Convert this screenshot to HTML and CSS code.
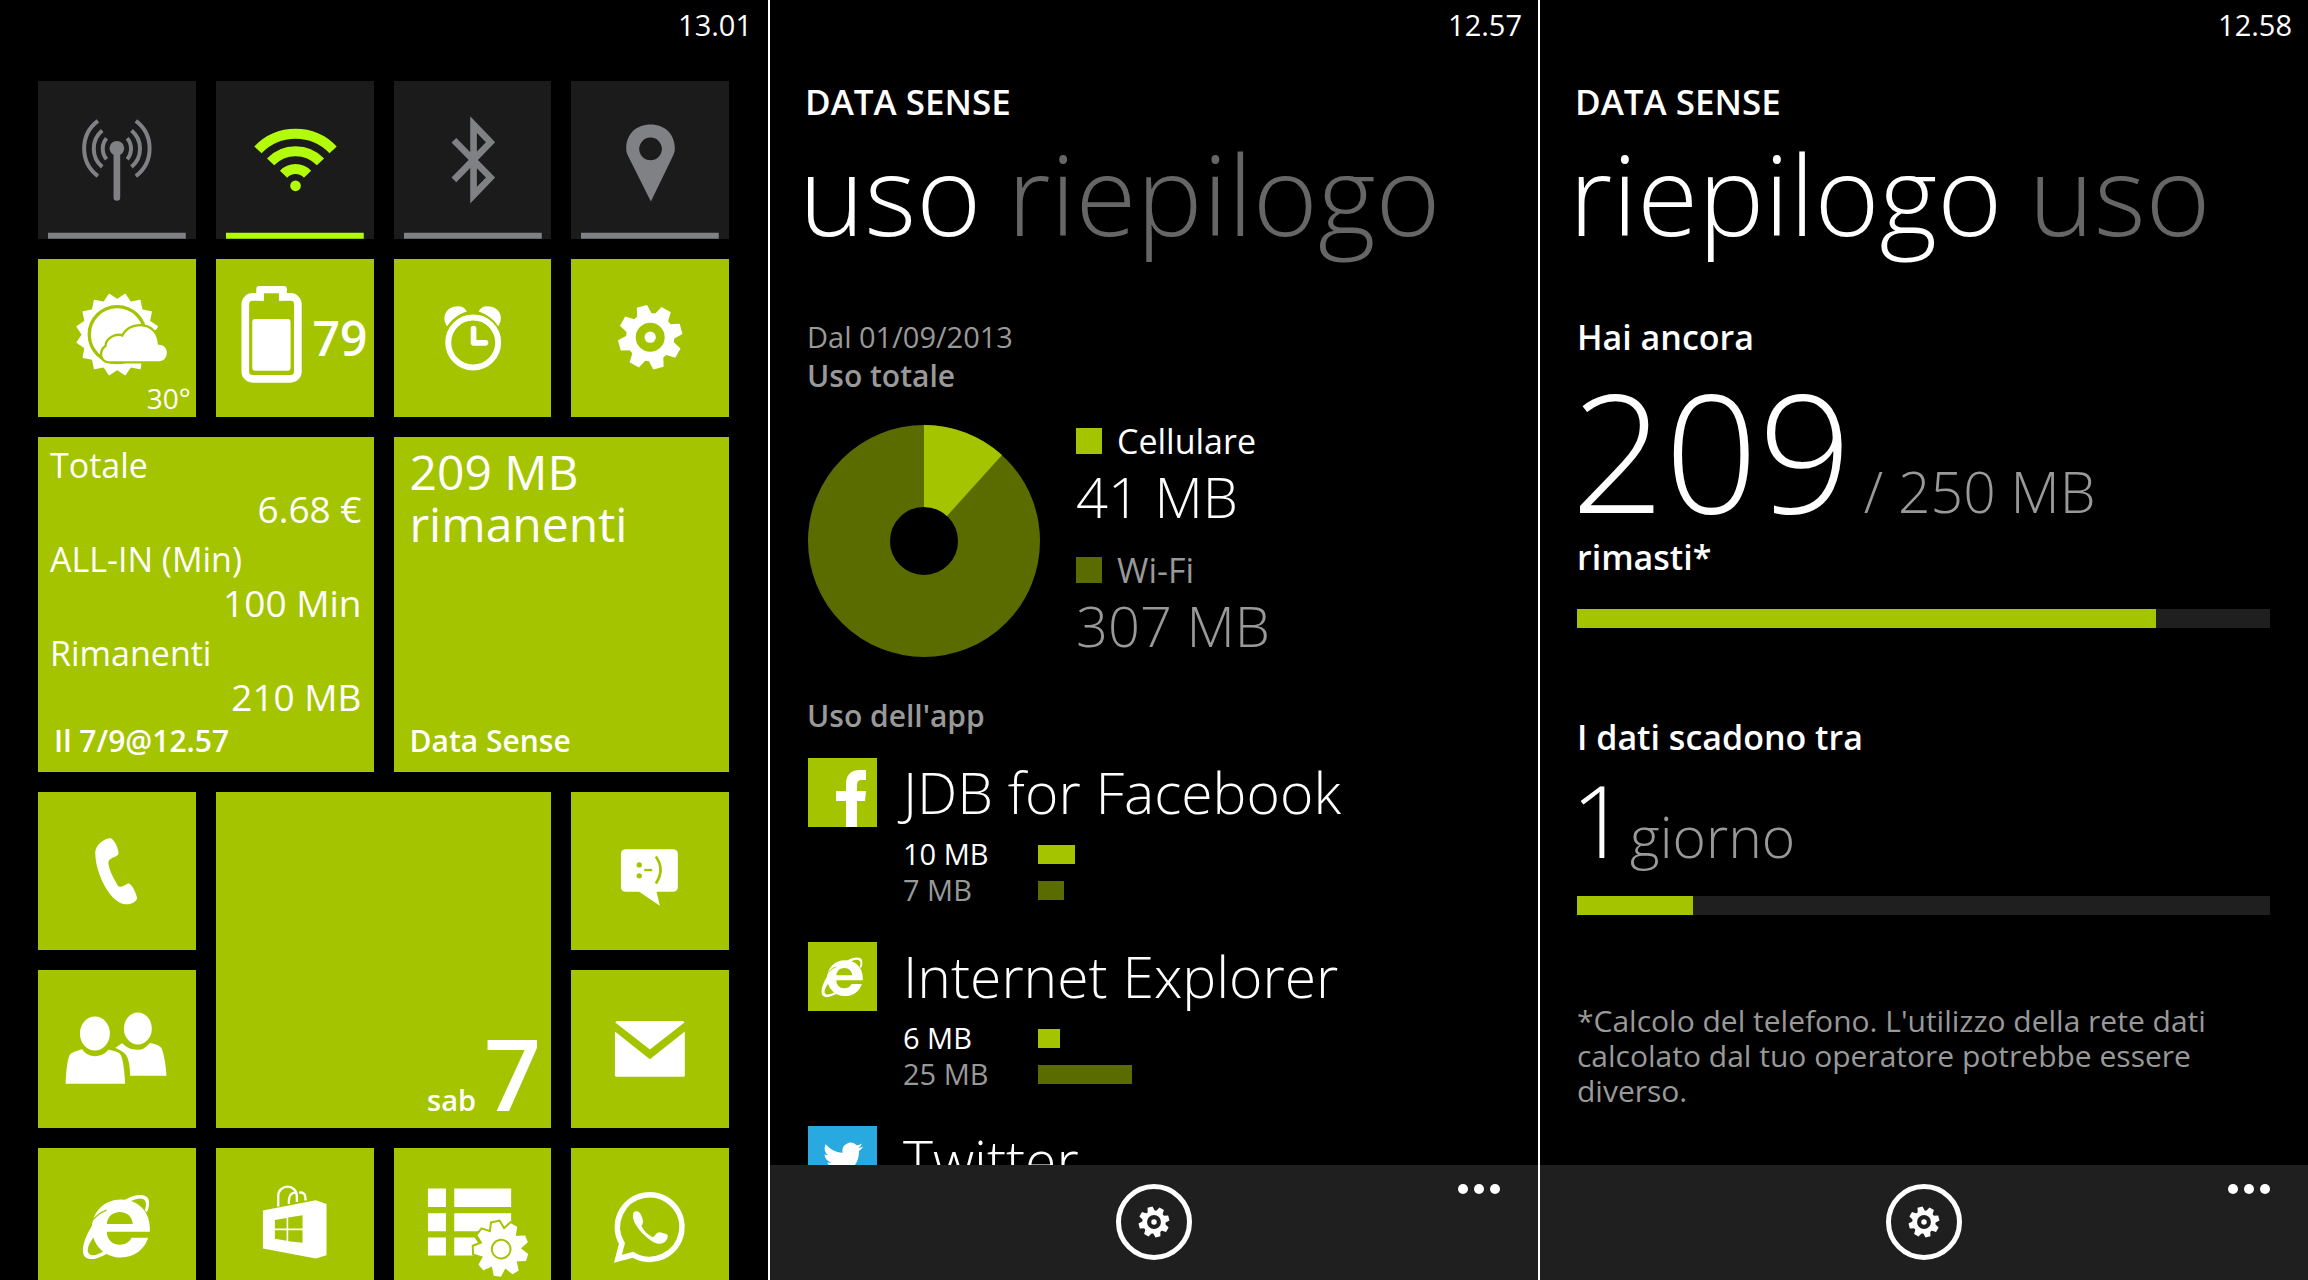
FILE: index.html
```html
<!DOCTYPE html>
<html lang="it">
<head>
<meta charset="utf-8">
<meta name="viewport" content="width=device-width, initial-scale=1">
<title>Data Sense</title>
<link rel="stylesheet" href="styles.css">
</head>
<body>
<svg class="defs" aria-hidden="true">
  <defs>
    <polygon id="tooth" points="-16,-96 16,-96 23,-66 -23,-66"/>
    <g id="gear">
      <circle r="58" fill="none" stroke="currentColor" stroke-width="29"/>
      <circle r="17" fill="currentColor"/>
      <g fill="currentColor" transform="rotate(-15)">
        <use href="#tooth"/>
        <use href="#tooth" transform="rotate(45)"/>
        <use href="#tooth" transform="rotate(90)"/>
        <use href="#tooth" transform="rotate(135)"/>
        <use href="#tooth" transform="rotate(180)"/>
        <use href="#tooth" transform="rotate(225)"/>
        <use href="#tooth" transform="rotate(270)"/>
        <use href="#tooth" transform="rotate(315)"/>
      </g>
    </g>
    <g id="explorer">
      <path fill="#fff" fill-rule="evenodd" d="M336 252H207C207 275 222 291 246 291C262 291 275 283 281 270H331C320 305 290 329 249 329C200 329 162 290 162 241C162 192 200 155 249 155C300 155 336 190 336 241ZM207 228H285C283 207 268 192 246 192C224 192 208 207 207 228Z"/>
      <path fill="#fff" d="M258 157C290 139 322 135 331 152C336 163 334 180 327 194L321 187C329 165 324 151 304 152C294 153 284 157 274 162Z"/>
      <path fill="#fff" d="M204 188C165 218 135 275 135 308C135 334 156 337 177 331C190 327 202 321 212 315L202 307C182 320 155 331 150 312C148 300 155 285 166 270Z"/>
      <path fill="none" stroke="#a4c400" stroke-width="4" d="M156 226C172 206 187 194 206 187"/>
    </g>
    <polygon id="point" points="-11,-82 11,-82 23,-48 -23,-48"/>
    <g id="burst">
      <circle r="56"/>
      <use href="#point"/>
      <use href="#point" transform="rotate(40)"/>
      <use href="#point" transform="rotate(80)"/>
      <use href="#point" transform="rotate(120)"/>
      <use href="#point" transform="rotate(160)"/>
      <use href="#point" transform="rotate(200)"/>
      <use href="#point" transform="rotate(240)"/>
      <use href="#point" transform="rotate(280)"/>
      <use href="#point" transform="rotate(320)"/>
    </g>
  </defs>
</svg>

<main class="screens">

  <section class="screen" aria-label="Start">
    <div class="status"><time>13.01</time></div>
    <div class="tiles">
      <button class="tile tile-toggle" type="button" aria-label="Rete cellulare">
        <svg class="tile-icon" viewBox="0 0 474 474"><g fill="none" stroke="currentColor" stroke-width="12"><path d="M294 120A104 104 0 0 1 294 286M281 149A71 71 0 0 1 281 258M268 172A49 49 0 0 1 268 235M180 120A104 104 0 0 0 180 286M193 149A71 71 0 0 0 193 258M206 172A49 49 0 0 0 206 235"/><path d="M237 202V350" stroke-width="20" stroke-linecap="round"/></g><circle cx="237" cy="202" r="22" fill="currentColor"/><path fill="currentColor" d="M30 456H444V474H30Z"/></svg>
      </button>
      <button class="tile tile-toggle is-on" type="button" aria-label="Wi-Fi">
        <svg class="tile-icon" viewBox="0 0 474 474"><g fill="none" stroke="currentColor" stroke-width="30"><path d="M126 207A156 156 0 0 1 352 207M164 243A104 104 0 0 1 314 243M203 280A50 50 0 0 1 275 280"/></g><circle cx="239" cy="315" r="16" fill="currentColor"/><path fill="currentColor" d="M30 456H444V474H30Z"/></svg>
      </button>
      <button class="tile tile-toggle" type="button" aria-label="Bluetooth">
        <svg class="tile-icon" viewBox="0 0 474 474"><path fill="none" stroke="currentColor" stroke-width="20" d="M180 178L290 290L239 343V131L290 184L180 297"/><path fill="currentColor" d="M30 456H444V474H30Z"/></svg>
      </button>
      <button class="tile tile-toggle" type="button" aria-label="Posizione">
        <svg class="tile-icon" viewBox="0 0 474 474"><path fill="currentColor" fill-rule="evenodd" d="M239 131C282 131 312 160 312 203C312 215 308 222 303 232L240 362L175 232C168 218 166 215 166 203C166 160 196 131 239 131ZM239 170A34 34 0 1 0 239 238A34 34 0 1 0 239 170Z"/><path fill="currentColor" d="M30 456H444V474H30Z"/></svg>
      </button>

      <a class="tile" href="#" aria-label="Meteo">
        <svg class="tile-icon" viewBox="0 0 474 474"><g transform="translate(238 227)" fill="#fff" stroke="#fff" stroke-width="4" stroke-linejoin="round"><rect x="-87" y="-87" width="174" height="174" transform="rotate(11.25)"/><rect x="-87" y="-87" width="174" height="174" transform="rotate(33.75)"/><rect x="-87" y="-87" width="174" height="174" transform="rotate(56.25)"/><rect x="-87" y="-87" width="174" height="174" transform="rotate(78.75)"/></g><circle cx="238" cy="227" r="84" fill="none" stroke="#a4c400" stroke-width="10"/><path fill="#a4c400" d="M312 213H372V372H312Z"/><path fill="#fff" stroke="#a4c400" stroke-width="14" paint-order="stroke" d="M212 307C190 307 186 275 206 264C206 240 235 225 255 234C265 212 285 202 308 202C340 202 360 228 360 258C378 256 387 268 387 282C387 296 378 307 364 307Z"/></svg>
        <span class="tile-temp">30°</span>
      </a>
      <a class="tile" href="#" aria-label="Batteria">
        <svg class="tile-icon" viewBox="0 0 474 474"><rect x="88" y="114" width="158" height="246" rx="22" fill="none" stroke="#fff" stroke-width="23"/><rect x="121" y="81" width="92" height="44" rx="9" fill="#fff"/><path fill="#a4c400" d="M144 103H189V128H144Z"/><rect x="109" y="180" width="115" height="156" rx="9" fill="#fff"/></svg>
        <span class="tile-level">79</span>
      </a>
      <a class="tile" href="#" aria-label="Sveglia">
        <svg class="tile-icon" viewBox="0 0 474 474"><circle cx="238" cy="251" r="75" fill="none" stroke="#fff" stroke-width="18"/><path fill="none" stroke="#fff" stroke-width="17" stroke-linecap="round" stroke-linejoin="round" d="M239 209V252H275"/><path fill="#fff" d="M160 202C142 178 154 142 193 142C205 142 213 147 219 158C195 165 175 180 160 202ZM313 202C331 178 319 142 280 142C268 142 260 147 254 158C278 165 298 180 313 202Z"/></svg>
      </a>
      <a class="tile" href="#" aria-label="Impostazioni">
        <svg class="tile-icon" viewBox="0 0 474 474"><use href="#gear" x="238" y="235"/></svg>
      </a>

      <a class="tile tile-wide" href="#">
        <dl class="balance">
          <dt>Totale</dt><dd>6.68 €</dd>
          <dt>ALL-IN (Min)</dt><dd>100 Min</dd>
          <dt>Rimanenti</dt><dd>210 MB</dd>
        </dl>
        <span class="tile-caption">Il 7/9@12.57</span>
      </a>
      <a class="tile tile-wide" href="#">
        <span class="tile-message">209 MB<br>rimanenti</span>
        <span class="tile-caption">Data Sense</span>
      </a>

      <a class="tile" href="#" aria-label="Telefono">
        <svg class="tile-icon" viewBox="0 0 474 474"><path fill="#fff" d="M217 139C225 139 240 160 242 184C242 197 208 195 212 217C215 240 230 262 240 282C248 290 262 278 272 274C282 276 296 305 298 320C290 335 276 338 262 337C240 335 222 315 208 295C190 265 172 225 172 180C174 158 200 139 217 139Z"/></svg>
      </a>
      <a class="tile tile-wide" href="#" aria-label="Calendario">
        <span class="tile-date"><span class="tile-day">sab</span><span class="tile-number">7</span></span>
      </a>
      <a class="tile" href="#" aria-label="Messaggi">
        <svg class="tile-icon" viewBox="0 0 474 474"><path fill="#fff" d="M165 172H306Q321 172 321 187V285Q321 300 306 300H257L267 342L205 300H165Q150 300 150 285V187Q150 172 165 172Z"/><g fill="#a4c400"><circle cx="205" cy="219" r="8"/><circle cx="205" cy="252" r="8"/><path d="M220 231H244V238H220Z"/></g><path fill="none" stroke="#a4c400" stroke-width="8" d="M255 194Q283 234 255 275"/></svg>
      </a>

      <a class="tile" href="#" aria-label="Contatti">
        <svg class="tile-icon" viewBox="0 0 474 474"><g fill="#fff"><ellipse cx="171" cy="191" rx="45" ry="51"/><ellipse cx="300" cy="176" rx="42" ry="48"/><path d="M83 342C85 300 88 264 98 252C108 245 125 240 133 238C140 250 155 259 172 259C188 259 205 250 211 240C222 241 240 246 246 252C256 262 260 310 262 342Z"/><path d="M277 318C276 285 272 255 254 246C246 240 239 236 232 234L252 220C262 226 270 239 299 240C318 240 330 226 336 219C350 221 366 226 372 236C380 260 385 290 386 318Z"/></g></svg>
      </a>
      <a class="tile" href="#" aria-label="Posta">
        <svg class="tile-icon" viewBox="0 0 474 474"><path fill="#fff" d="M137 153H337L341 158L237 239L133 158ZM132 185L237 268L342 185V318L339 321H135L132 318Z"/></svg>
      </a>

      <a class="tile" href="#" aria-label="Internet Explorer">
        <svg class="tile-icon" viewBox="0 0 474 474"><use href="#explorer"/></svg>
      </a>
      <a class="tile" href="#" aria-label="Store">
        <svg class="tile-icon" viewBox="0 0 474 474"><path fill="#fff" d="M141 188L300 157L332 168V322L300 332L141 302Z"/><path fill="none" stroke="#fff" stroke-width="7" d="M187 176V144C187 108 243 105 243 146V162M219 168C218 144 224 134 240 134M250 134C266 132 269 140 269 158"/><path fill="#a4c400" d="M177 216L212 210V242H177ZM217 209L260 202V242H217ZM177 247H212V279L177 273ZM217 247H260V285L217 280Z"/></svg>
      </a>
      <a class="tile" href="#" aria-label="Impostazioni app">
        <svg class="tile-icon" viewBox="0 0 474 474"><path fill="#fff" d="M102 122H156V177H102ZM102 196H156V250H102ZM102 269H156V323H102ZM181 122H352V177H181ZM181 196H352V250H181ZM181 269H242L262 298L238 323H181Z"/><g transform="translate(322 304) rotate(-12)"><use href="#burst" fill="#a4c400" stroke="#a4c400" stroke-width="12"/><use href="#burst" fill="#fff"/><circle r="28" fill="none" stroke="#a4c400" stroke-width="6"/></g></svg>
      </a>
      <a class="tile" href="#" aria-label="WhatsApp">
        <svg class="tile-icon" viewBox="0 0 474 474"><path fill="none" stroke="#fff" stroke-width="17" d="M153 287L141 333L187 321A97 97 0 1 0 153 287Z"/><path fill="#fff" d="M188 193C196 187 206 190 210 200C216 216 220 224 212 233C215 246 232 262 246 268C256 262 258 250 270 254C280 257 290 258 291 264C290 280 278 288 266 288C240 288 186 235 186 205Z"/></svg>
      </a>
    </div>
  </section>

  <section class="screen" aria-label="Data Sense, uso">
    <div class="status"><time>12.57</time></div>
    <header class="head">
      <h1 class="app-name">DATA SENSE</h1>
      <nav class="tabs">
        <button class="tab is-active" type="button">uso</button>
        <button class="tab" type="button">riepilogo</button>
      </nav>
    </header>
    <div class="content">
      <p class="since">Dal 01/09/2013</p>
      <h2 class="subhead">Uso totale</h2>
      <div class="total">
        <svg class="donut" viewBox="0 0 232 232" role="img" aria-label="Cellulare 41 MB, Wi-Fi 307 MB"><circle cx="116" cy="116" r="75" fill="none" stroke="#5a6b00" stroke-width="82"/><path fill="#a4c400" d="M116 0A116 116 0 0 1 194 30L139 91A34 34 0 0 0 116 82Z"/></svg>
        <dl class="legend">
          <div class="legend-item cell"><dt>Cellulare</dt><dd>41 MB</dd></div>
          <div class="legend-item wifi"><dt>Wi-Fi</dt><dd>307 MB</dd></div>
        </dl>
      </div>
      <h2 class="subhead">Uso dell'app</h2>
      <ul class="apps">
        <li class="app">
          <svg class="app-icon" viewBox="0 0 69 69" aria-hidden="true"><path fill="#fff" d="M38 69V43H28V33H38V26C38 16 44 12 52 12H58V22H54C50 22 49 24 49 28V33H58L57 43H49V69Z"/></svg>
          <h3 class="app-title">JDB for Facebook</h3>
          <div class="app-usage">
            <div class="usage cell"><span>10 MB</span><i class="bar" style="width:37px"></i></div>
            <div class="usage wifi"><span>7 MB</span><i class="bar" style="width:26px"></i></div>
          </div>
        </li>
        <li class="app">
          <svg class="app-icon" viewBox="69 66 336 336" aria-hidden="true"><use href="#explorer"/></svg>
          <h3 class="app-title">Internet Explorer</h3>
          <div class="app-usage">
            <div class="usage cell"><span>6 MB</span><i class="bar" style="width:22px"></i></div>
            <div class="usage wifi"><span>25 MB</span><i class="bar" style="width:94px"></i></div>
          </div>
        </li>
        <li class="app">
          <svg class="app-icon app-icon-blue" viewBox="0 0 69 69" aria-hidden="true"><path fill="#fff" transform="translate(15 13) scale(1.67)" d="M23.953 4.57a10 10 0 01-2.825.775 4.958 4.958 0 002.163-2.723c-.951.555-2.005.959-3.127 1.184a4.92 4.92 0 00-8.384 4.482C7.69 8.095 4.067 6.13 1.64 3.162a4.822 4.822 0 00-.666 2.475c0 1.71.87 3.213 2.188 4.096a4.904 4.904 0 01-2.228-.616v.06a4.923 4.923 0 003.946 4.827 4.996 4.996 0 01-2.212.085 4.936 4.936 0 004.604 3.417 9.867 9.867 0 01-6.102 2.105c-.39 0-.779-.023-1.17-.067a13.995 13.995 0 007.557 2.209c9.053 0 13.998-7.496 13.998-13.985 0-.21 0-.42-.015-.63A9.935 9.935 0 0024 4.59z"/></svg>
          <h3 class="app-title">Twitter</h3>
        </li>
      </ul>
    </div>
    <footer class="appbar">
      <button class="appbar-button" type="button" aria-label="Impostazioni"><svg viewBox="-100 -100 200 200"><use href="#gear"/></svg></button>
      <button class="appbar-more" type="button" aria-label="Altro"><svg viewBox="0 0 42 10"><circle cx="5" cy="5" r="5"/><circle cx="21" cy="5" r="5"/><circle cx="37" cy="5" r="5"/></svg></button>
    </footer>
  </section>

  <section class="screen" aria-label="Data Sense, riepilogo">
    <div class="status"><time>12.58</time></div>
    <header class="head">
      <h1 class="app-name">DATA SENSE</h1>
      <nav class="tabs">
        <button class="tab is-active" type="button">riepilogo</button>
        <button class="tab" type="button">uso</button>
      </nav>
    </header>
    <div class="content">
      <label class="lead" for="data-left">Hai ancora</label>
      <p class="figure figure-data"><strong>209</strong><span>/ 250 MB</span></p>
      <p class="lead">rimasti*</p>
      <progress class="meter meter-data" id="data-left" max="250" value="209"></progress>
      <label class="lead" for="days-left">I dati scadono tra</label>
      <p class="figure figure-days"><strong>1</strong><span>giorno</span></p>
      <progress class="meter meter-days" id="days-left" max="6" value="1"></progress>
      <p class="note">*Calcolo del telefono. L'utilizzo della rete dati calcolato dal tuo operatore potrebbe essere diverso.</p>
    </div>
    <footer class="appbar">
      <button class="appbar-button" type="button" aria-label="Impostazioni"><svg viewBox="-100 -100 200 200"><use href="#gear"/></svg></button>
      <button class="appbar-more" type="button" aria-label="Altro"><svg viewBox="0 0 42 10"><circle cx="5" cy="5" r="5"/><circle cx="21" cy="5" r="5"/><circle cx="37" cy="5" r="5"/></svg></button>
    </footer>
  </section>

</main>
</body>
</html>
```
FILE: styles.css
```css
:root {
  --lime: #a4c400;
  --olive: #5a6b00;
  --bright: #b2fb0a;
  --grey: #999;
  --dim: #666;
  --panel: #1f1f1f;
}

* { box-sizing: border-box; }

body {
  margin: 0;
  background: #000;
  color: #fff;
  font-family: "Open Sans", "Noto Sans", sans-serif;
  font-weight: 400;
}

h1, h2, h3, p, dl, dt, dd, ul { margin: 0; padding: 0; }
ul { list-style: none; }
a { color: inherit; text-decoration: none; }

button {
  margin: 0;
  padding: 0;
  border: 0;
  background: none;
  color: inherit;
  font: inherit;
}

.defs {
  position: absolute;
  width: 0;
  height: 0;
}

/* Three phone screens side by side */
.screens {
  display: flex;
  height: 100vh;
}

.screen {
  display: flex;
  flex-direction: column;
  flex: 1 1 0;
  box-sizing: content-box;
  min-width: 0;
  overflow: hidden;
}

.screen + .screen { border-left: 2px solid #fff; }

.status {
  flex: none;
  padding-right: 16px;
  font-size: 29px;
  line-height: 50px;
  text-align: right;
}

/* Start screen */
.tiles {
  display: grid;
  grid-template-columns: repeat(4, 1fr);
  gap: 20px;
  padding: 31px 39px 0 38px;
}

.tile {
  display: grid;
  aspect-ratio: 1;
  min-width: 0;
  background: var(--lime);
  color: #fff;
}

.tile > * { grid-area: 1 / 1; }

.tile-wide {
  grid-column: span 2;
  grid-row: span 2;
}

.tile-toggle {
  background: #1b1b1b;
  color: #808184;
}

.tile-toggle.is-on { color: var(--bright); }

.tile-icon {
  display: block;
  width: 100%;
  height: 100%;
}

.tile-temp {
  place-self: end;
  padding-right: 5px;
  font-size: 28px;
  line-height: 38px;
}

.tile-level {
  place-self: center end;
  padding-right: 6px;
  font-size: 48px;
  line-height: 48px;
  font-weight: 600;
}

.balance {
  padding: 5px 12px 0;
}

.balance dt {
  font-size: 34px;
  line-height: 46px;
}

.balance dd {
  padding-bottom: 6px;
  font-size: 37px;
  line-height: 42px;
  text-align: right;
}

.tile-caption {
  align-self: end;
  padding: 0 16px 11px;
  font-size: 30px;
  line-height: 40px;
  font-weight: 600;
}

.tile-message {
  padding: 9px 16px 0;
  font-size: 48px;
  line-height: 52px;
}

.tile-date {
  display: flex;
  align-items: baseline;
  place-self: end;
  gap: 8px;
  padding: 0 10px 6px 0;
  font-weight: 600;
}

.tile-day {
  font-size: 29px;
  line-height: 40px;
}

.tile-number {
  font-size: 100px;
  line-height: 100px;
}

/* Data Sense screens */
.head {
  flex: none;
  padding: 32px 36px 0 35px;
}

.app-name {
  font-size: 35px;
  line-height: 40px;
  font-weight: 600;
}

.tabs {
  display: flex;
  gap: 26px;
  margin: 11px 0 0 -6px;
  font-size: 111px;
  line-height: 120px;
  font-weight: 300;
  white-space: nowrap;
}

.tab { color: var(--dim); }
.tab.is-active { color: #fff; }

.content {
  flex: 1 1 0;
  min-height: 0;
  padding: 64px 38px 0 37px;
  overflow: hidden;
}

.since,
.subhead {
  color: var(--grey);
  font-size: 30px;
  line-height: 39px;
}

.since { font-size: 29px; }
.subhead { font-weight: 600; }

.total {
  display: flex;
  align-items: flex-end;
  gap: 36px;
  margin: 26px 0 39px;
  padding-left: 1px;
}

.donut {
  display: block;
  flex: none;
  width: 232px;
  height: 232px;
}

.legend {
  display: grid;
  gap: 22px;
}

.legend dt {
  display: flex;
  align-items: center;
  gap: 15px;
  font-size: 34px;
  line-height: 40px;
}

.legend dt::before {
  width: 26px;
  height: 26px;
  background: var(--swatch);
  content: "";
}

.legend dd {
  padding-top: 3px;
  font-size: 56px;
  line-height: 64px;
  font-weight: 300;
}

.cell { --swatch: var(--lime); }

.wifi {
  --swatch: var(--olive);
  color: var(--grey);
}

.apps {
  display: grid;
  gap: 34px;
  margin-top: 23px;
  padding-left: 1px;
}

.app {
  display: grid;
  grid-template-columns: 69px 1fr;
  column-gap: 26px;
}

.app-icon {
  display: block;
  width: 69px;
  height: 69px;
  background: var(--lime);
}

.app-icon-blue { background: #28a9e0; }

.app-title {
  font-size: 57px;
  line-height: 69px;
  font-weight: 300;
  white-space: nowrap;
}

.app-usage {
  grid-column: 2;
  padding-top: 9px;
}

.usage {
  display: grid;
  grid-template-columns: 135px 1fr;
  align-items: center;
  font-size: 29px;
  line-height: 36px;
}

.bar {
  height: 19px;
  background: var(--swatch);
}

.lead {
  display: block;
  font-size: 34px;
  line-height: 40px;
  font-weight: 600;
}

.figure {
  display: flex;
  align-items: baseline;
  margin-left: -6px;
}

.figure strong { font-weight: 300; }

.figure span {
  color: var(--grey);
  font-size: 57px;
  line-height: 40px;
  font-weight: 300;
}

.figure-data {
  gap: 12px;
  margin-top: 23px;
  margin-bottom: 17px;
  line-height: 140px;
}

.figure-data strong { font-size: 164px; }

.figure-days {
  gap: 2px;
  margin-top: 22px;
  line-height: 80px;
}

.figure-days strong { font-size: 100px; }

.meter {
  display: block;
  width: 100%;
  height: 19px;
  border: 0;
  background: var(--panel);
  appearance: none;
}

.meter::-webkit-progress-bar { background: var(--panel); }
.meter::-webkit-progress-value { background: var(--lime); }

.meter-data { margin: 32px 0 89px; }
.meter-days { margin: 37px 0 88px; }

.note {
  color: var(--grey);
  font-size: 30px;
  line-height: 35px;
}

.appbar {
  display: grid;
  flex: none;
  grid-template-columns: 1fr auto 1fr;
  align-items: start;
  height: 115px;
  padding: 19px 38px 0;
  background: var(--panel);
}

.appbar-button {
  display: grid;
  grid-column: 2;
  place-items: center;
  width: 76px;
  height: 76px;
  border: 5px solid #fff;
  border-radius: 50%;
}

.appbar-button svg {
  width: 32px;
  height: 32px;
}

.appbar-more {
  grid-column: 3;
  justify-self: end;
}

.appbar-more svg {
  display: block;
  width: 42px;
  height: 10px;
  fill: #fff;
}
```
